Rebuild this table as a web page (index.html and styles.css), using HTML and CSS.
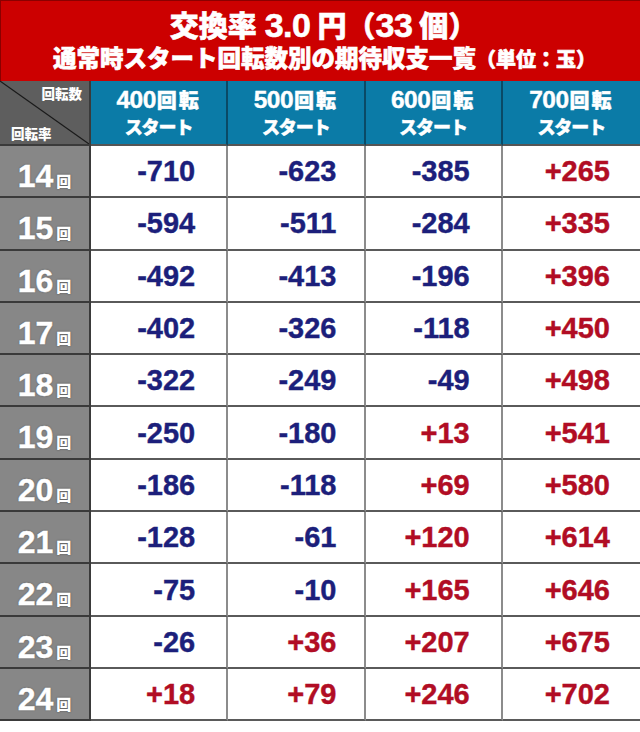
FILE: index.html
```html
<!DOCTYPE html>
<html lang="ja">
<head>
<meta charset="utf-8">
<title>交換率 3.0 円（33 個）</title>
<link rel="stylesheet" href="styles.css">
</head>
<body>
<div class="page">
  <header class="title">
    <div class="title-main">交換率<span class="num">3.0</span>円（<span class="num num-in">33</span>個）</div>
    <div class="title-sub">通常時スタート回転数別の期待収支一覧<span class="unit">（単位：玉）</span></div>
  </header>
  <div class="grid">
    <div class="corner">
      <svg class="diag" viewBox="0 0 91 65" preserveAspectRatio="none"><line x1="0" y1="0" x2="91" y2="65" stroke="#1a1a1a" stroke-width="1.2"/></svg>
      <span class="c-top">回転数</span>
      <span class="c-bot">回転率</span>
    </div>
    <div class="head"><div class="h1">400<span class="h-kai">回転</span></div><div class="h2">スタート</div></div>
    <div class="head"><div class="h1">500<span class="h-kai">回転</span></div><div class="h2">スタート</div></div>
    <div class="head"><div class="h1">600<span class="h-kai">回転</span></div><div class="h2">スタート</div></div>
    <div class="head"><div class="h1">700<span class="h-kai">回転</span></div><div class="h2">スタート</div></div>

    <div class="label">14<span class="kai">回</span></div>
    <div class="cell neg c1">-710</div><div class="cell neg c2">-623</div><div class="cell neg c3">-385</div><div class="cell pos c4">+265</div>
    <div class="label">15<span class="kai">回</span></div>
    <div class="cell neg c1">-594</div><div class="cell neg c2">-511</div><div class="cell neg c3">-284</div><div class="cell pos c4">+335</div>
    <div class="label">16<span class="kai">回</span></div>
    <div class="cell neg c1">-492</div><div class="cell neg c2">-413</div><div class="cell neg c3">-196</div><div class="cell pos c4">+396</div>
    <div class="label">17<span class="kai">回</span></div>
    <div class="cell neg c1">-402</div><div class="cell neg c2">-326</div><div class="cell neg c3">-118</div><div class="cell pos c4">+450</div>
    <div class="label">18<span class="kai">回</span></div>
    <div class="cell neg c1">-322</div><div class="cell neg c2">-249</div><div class="cell neg c3">-49</div><div class="cell pos c4">+498</div>
    <div class="label">19<span class="kai">回</span></div>
    <div class="cell neg c1">-250</div><div class="cell neg c2">-180</div><div class="cell pos c3">+13</div><div class="cell pos c4">+541</div>
    <div class="label">20<span class="kai">回</span></div>
    <div class="cell neg c1">-186</div><div class="cell neg c2">-118</div><div class="cell pos c3">+69</div><div class="cell pos c4">+580</div>
    <div class="label">21<span class="kai">回</span></div>
    <div class="cell neg c1">-128</div><div class="cell neg c2">-61</div><div class="cell pos c3">+120</div><div class="cell pos c4">+614</div>
    <div class="label">22<span class="kai">回</span></div>
    <div class="cell neg c1">-75</div><div class="cell neg c2">-10</div><div class="cell pos c3">+165</div><div class="cell pos c4">+646</div>
    <div class="label">23<span class="kai">回</span></div>
    <div class="cell neg c1">-26</div><div class="cell pos c2">+36</div><div class="cell pos c3">+207</div><div class="cell pos c4">+675</div>
    <div class="label">24<span class="kai">回</span></div>
    <div class="cell pos c1">+18</div><div class="cell pos c2">+79</div><div class="cell pos c3">+246</div><div class="cell pos c4">+702</div>
  </div>
</div>
</body>
</html>
```

FILE: styles.css
```css
html, body {
  margin: 0;
  padding: 0;
  background: #ffffff;
}
body {
  font-family: "Liberation Sans", "Noto Sans CJK JP", sans-serif;
  font-weight: bold;
}
.page {
  width: 640px;
}
.title {
  height: 81px;
  box-sizing: border-box;
  background: #cc0000;
  border-top: 1px solid #8a0000;
  border-left: 1px solid #8a0000;
  color: #ffffff;
  display: flex;
  flex-direction: column;
  align-items: center;
  padding-top: 6px;
  -webkit-text-stroke: 0.6px #ffffff;
}
.title-main {
  font-family: "Noto Sans CJK JP", sans-serif;
  font-size: 29px;
  line-height: 34px;
  height: 34px;
  font-weight: 900;
  display: flex;
  align-items: baseline;
  padding-left: 6px;
}
.title-main .num {
  font-family: "Liberation Sans", sans-serif;
  font-weight: bold;
  font-size: 34px;
  margin: 0 7px 0 8px;
  letter-spacing: -0.5px;
}
.title-main .num-in {
  margin-left: 0;
}
.title-sub {
  font-size: 23.5px;
  line-height: 30px;
  margin-top: 3px;
  padding-left: 8px;
  font-weight: 900;
}
.title-sub .unit {
  font-size: 20px;
}
.grid {
  display: grid;
  grid-template-columns: 91px repeat(4, 1fr);
  grid-template-rows: 65px repeat(11, 52.3px);
}
.corner {
  position: relative;
  background: #5e5e5e;
  border-right: 2px solid #3a3a3a;
  border-bottom: 2px solid #3a3a3a;
  box-sizing: border-box;
  color: #ffffff;
  font-size: 13.5px;
  font-weight: 900;
  font-family: "Noto Sans CJK JP", sans-serif;
}
.diag {
  position: absolute;
  left: 0;
  top: 0;
  width: 100%;
  height: 100%;
}
.c-top {
  position: absolute;
  right: 7px;
  top: 3px;
  line-height: 18px;
}
.c-bot {
  position: absolute;
  left: 11px;
  bottom: 2px;
  line-height: 18px;
}
.head {
  background: #0b7ba7;
  color: #ffffff;
  border-right: 2px solid #0a4a66;
  border-bottom: 2px solid #555555;
  box-sizing: border-box;
  display: flex;
  flex-direction: column;
  align-items: center;
  justify-content: center;
  padding-bottom: 2px;
  -webkit-text-stroke: 0.4px #ffffff;
}
.head:nth-child(5) {
  border-right: none;
}
.h1 {
  font-size: 24.5px;
  line-height: 24px;
  height: 24px;
  letter-spacing: -0.5px;
}
.h-kai {
  font-family: "Noto Sans CJK JP", sans-serif;
  font-weight: 900;
  font-size: 20px;
  line-height: 20px;
  letter-spacing: 2px;
  margin-left: 1px;
}
.h2 {
  font-family: "Noto Sans CJK JP", sans-serif;
  font-weight: 900;
  font-size: 18px;
  line-height: 18px;
  margin-top: 5px;
  letter-spacing: -1px;
}
.label {
  background: #878787;
  color: #ffffff;
  border-right: 2px solid #3a3a3a;
  border-bottom: 2px solid #3a3a3a;
  box-sizing: border-box;
  display: flex;
  align-items: baseline;
  justify-content: center;
  padding-top: 11px;
  font-size: 32px;
  line-height: 38px;
  text-shadow: 0 0 2px rgba(0, 0, 0, 0.45);
  -webkit-text-stroke: 0.4px #ffffff;
}
.kai {
  font-family: "Noto Sans CJK JP", sans-serif;
  font-weight: 900;
  font-size: 15px;
  margin-left: 3px;
  -webkit-text-stroke: 0;
}
.cell {
  border-bottom: 2px solid #5a5a5a;
  border-right: 2px solid #8c8c8c;
  box-sizing: border-box;
  display: flex;
  align-items: center;
  justify-content: flex-end;
  font-size: 29px;
  padding-right: 31px;
  padding-top: 1px;
  -webkit-text-stroke: 0.4px currentColor;
}
.cell.c2 {
  padding-right: 27px;
}
.cell.c1 {
  padding-right: 31px;
}
.cell.c4 {
  border-right: none;
  padding-right: 30px;
}
.neg {
  color: #1c1f7b;
}
.pos {
  color: #b10d24;
}
```
